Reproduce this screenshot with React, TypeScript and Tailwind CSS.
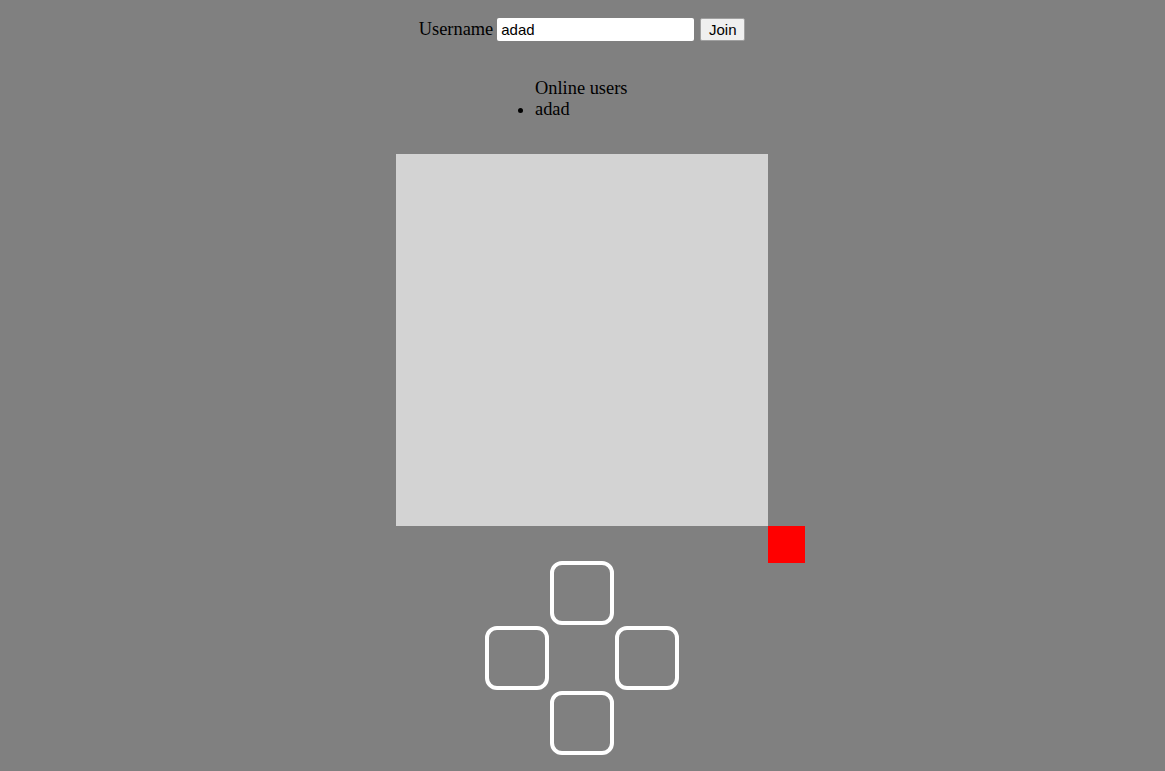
import { useState } from "react";

const serif = "font-['Liberation_Serif','Times_New_Roman',serif]";
const sans = "font-['Liberation_Sans',Arial,sans-serif]";

const PadButton = ({ label }: { label: string }) => (
  <button
    aria-label={label}
    className="w-16 h-16 rounded-[12px] border-4 border-white bg-transparent"
  />
);

export default function App() {
  const [name, setName] = useState("adad");
  const users = ["adad"];

  return (
    <div className={`min-h-[771px] w-full bg-[#808080] text-black ${serif}`}>
      <div className="w-[1164px] pt-[18px]">
        {/* Join form */}
        <div className="flex items-center justify-center h-[23px]">
          <label className="text-[18.4px] leading-[23px]">Username</label>
          <input
            value={name}
            onChange={(e) => setName(e.target.value)}
            className={`ml-[4px] w-[197px] h-[23px] bg-white rounded-[2px] px-[4px] text-[15px] outline-none ${sans}`}
          />
          <button
            className={`ml-[6px] w-[45px] h-[23px] bg-[#efefef] border border-[#a0a0a0] rounded-[2px] text-[15px] ${sans}`}
          >
            Join
          </button>
        </div>

        {/* Online users */}
        <div className="mt-[37px] mx-auto w-[372px] pl-[139px] text-[18.4px] leading-[21px]">
          <div>Online users</div>
          <ul className="list-disc list-outside">
            {users.map((u) => (
              <li key={u}>{u}</li>
            ))}
          </ul>
        </div>

        {/* Board */}
        <div className="mt-[34px] mx-auto w-[372px] h-[372px] bg-[#d3d3d3] relative">
          <div className="absolute left-[372px] top-[372px] w-[37px] h-[37px] bg-[#ff0000]" />
        </div>

        {/* D-pad */}
        <div className="mt-[35px] mx-auto w-[194px] grid grid-cols-[repeat(3,65px)] grid-rows-[repeat(3,65px)]">
          <div />
          <PadButton label="up" />
          <div />
          <PadButton label="left" />
          <div />
          <PadButton label="right" />
          <div />
          <PadButton label="down" />
          <div />
        </div>
      </div>
    </div>
  );
}
